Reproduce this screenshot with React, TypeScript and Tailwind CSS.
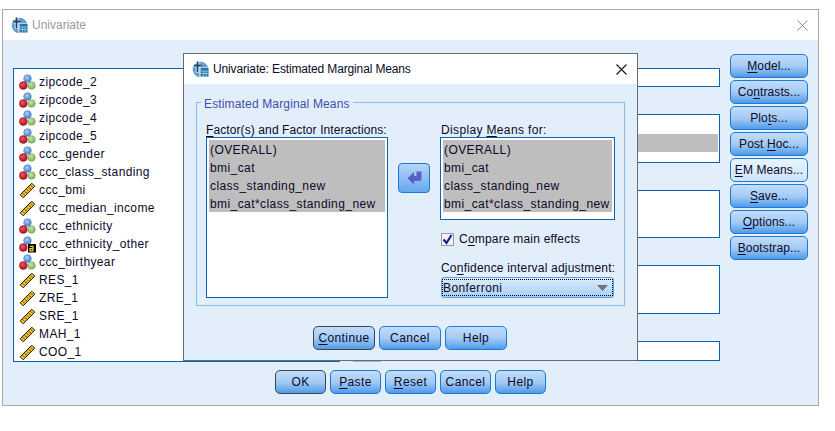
import type { ReactNode } from 'react';

function TitleIcon() {
  return (
    <svg width="17" height="17" viewBox="0 0 17 17" className="shrink-0">
      <circle cx="8.5" cy="8.5" r="7.8" fill="#5f9ed2" />
      <path d="M5.5 1v11M2 4.5h7" stroke="#fff" strokeWidth="3.4" fill="none" />
      <path d="M5.5 0.5v11M2 4.5h7.5" stroke="#17406b" strokeWidth="1.8" fill="none" />
      <rect x="7.5" y="6.5" width="9" height="9.5" fill="#fff" />
      <rect x="8.5" y="7" width="8" height="8.5" fill="#2374ad" />
      <path d="M9 10h7M9 12.5h7M11.5 10v5M14 10v5" stroke="#a9cde8" strokeWidth="0.8" fill="none" />
    </svg>
  );
}

function BallDefs() {
  return (
    <svg width="0" height="0" className="absolute">
      <defs>
        <radialGradient id="ballBlue" cx="40%" cy="35%" r="70%">
          <stop offset="0%" stopColor="#a9cdf3" />
          <stop offset="100%" stopColor="#3f7fd0" />
        </radialGradient>
        <radialGradient id="ballRed" cx="40%" cy="35%" r="70%">
          <stop offset="0%" stopColor="#f0555f" />
          <stop offset="100%" stopColor="#a80d1c" />
        </radialGradient>
        <radialGradient id="ballGreen" cx="40%" cy="35%" r="70%">
          <stop offset="0%" stopColor="#c9e5a6" />
          <stop offset="100%" stopColor="#77ab52" />
        </radialGradient>
      </defs>
    </svg>
  );
}

function NominalIcon({ text }: { text?: boolean }) {
  return (
    <svg width="17" height="17" viewBox="0 0 17 17" className="shrink-0">
      <circle cx="8.5" cy="4.5" r="3.8" fill="url(#ballBlue)" stroke="#3a6fb5" strokeWidth="0.5" />
      {!text && <circle cx="12.5" cy="11.5" r="3.8" fill="url(#ballGreen)" stroke="#6d9c4c" strokeWidth="0.5" />}
      <circle cx="4.3" cy="11.5" r="3.9" fill="url(#ballRed)" stroke="#8d0d18" strokeWidth="0.5" />
      {text && (
        <>
          <rect x="9" y="8" width="8" height="8.5" fill="#000" />
          <path d="M11 10.3h3v4.5h-3v-2.2h3" stroke="#f5d90a" strokeWidth="1.2" fill="none" />
        </>
      )}
    </svg>
  );
}

function ScaleIcon() {
  return (
    <svg width="17" height="17" viewBox="0 0 17 17" className="shrink-0">
      <path d="M1.2 12.8 12.8 1.2 15.8 4.2 4.2 15.8Z" fill="#f6c21c" stroke="#1c1c1c" strokeWidth="1" />
      <path d="M4 11.5l1.3 1.3M6 9.5l1.8 1.8M8 7.5l1.3 1.3M10 5.5l1.8 1.8M12 3.5l1.3 1.3" stroke="#1c1c1c" strokeWidth="1" fill="none" />
    </svg>
  );
}

function Key({ children }: { children: ReactNode }) {
  return <span className="underline underline-offset-2">{children}</span>;
}

type ButtonProps = { children: ReactNode; w: string; focused?: boolean; hot?: boolean; tight?: boolean };

function Btn({ children, w, focused, hot, tight }: ButtonProps) {
  return (
    <button
      className={`${w} h-6 shrink-0 rounded-[5px] border text-center text-xs leading-none text-[#0a0a28] bg-linear-to-b ${
        tight ? 'tracking-[0.1px]' : 'tracking-[0.4px]'
      } ${hot ? 'border-[#1a7ad8] from-[#e9f3fd] to-[#cde3fa]' : 'from-[#c2dcfa] via-[#a5cbf5] to-[#4f9ae8]'} ${
        focused ? 'border-[#3b4652] border-[1.5px]' : hot ? '' : 'border-[#1a7ad8]'
      }`}
    >
      {children}
    </button>
  );
}

function ListBox({ rows, className }: { rows: string[]; className: string }) {
  return (
    <div className={`${className} border border-[#0a64b4] bg-white p-[2px] text-xs tracking-[0.42px] text-[#0a0a28]`}>
      {rows.map((r) => (
        <div key={r} className="flex h-[18px] items-center bg-[#bebebe] pl-px pt-px whitespace-nowrap">
          {r}
        </div>
      ))}
    </div>
  );
}

const variables = [
  { name: 'zipcode_2', kind: 'nominal' },
  { name: 'zipcode_3', kind: 'nominal' },
  { name: 'zipcode_4', kind: 'nominal' },
  { name: 'zipcode_5', kind: 'nominal' },
  { name: 'ccc_gender', kind: 'nominal' },
  { name: 'ccc_class_standing', kind: 'nominal' },
  { name: 'ccc_bmi', kind: 'scale' },
  { name: 'ccc_median_income', kind: 'scale' },
  { name: 'ccc_ethnicity', kind: 'nominal' },
  { name: 'ccc_ethnicity_other', kind: 'text' },
  { name: 'ccc_birthyear', kind: 'nominal' },
  { name: 'RES_1', kind: 'scale' },
  { name: 'ZRE_1', kind: 'scale' },
  { name: 'SRE_1', kind: 'scale' },
  { name: 'MAH_1', kind: 'scale' },
  { name: 'COO_1', kind: 'scale' },
];

const factorRows = ['(OVERALL)', 'bmi_cat', 'class_standing_new', 'bmi_cat*class_standing_new'];

function EstimatedMeansDialog() {
  return (
    <div className="absolute left-[180px] top-[43px] z-10 flex h-[308px] w-[455px] flex-col border border-[#666c74] bg-[#e3eefb]">
      <div className="flex h-[30px] items-center gap-[4px] bg-white pl-[8px] pr-[10px]">
        <TitleIcon />
        <span className="text-xs tracking-[-0.14px] text-[#0a0a28]">Univariate: Estimated Marginal Means</span>
        <svg width="11" height="11" viewBox="0 0 11 11" className="ml-auto">
          <path d="M0.5 0.5l10 10M10.5 0.5l-10 10" stroke="#111" strokeWidth="1.1" fill="none" />
        </svg>
      </div>

      <fieldset className="ml-[12px] mr-[13px] mt-[11px] h-[211px] border border-[#8dbbe6] px-[9px]">
        <legend className="ml-[-5px] px-[3px] text-xs leading-[14px] tracking-[0.15px] text-[#3f4fa8]">
          <span className="block translate-y-[2px]">Estimated Marginal Means</span>
        </legend>
        <div className="mt-[12px] flex">
          <div className="w-[182px]">
            <div className="h-4 pt-px text-xs leading-4 tracking-[0.1px] whitespace-nowrap text-[#0a0a28]">
              <Key>F</Key>actor(s) and Factor Interactions:
            </div>
            <ListBox rows={factorRows} className="h-[161px] w-[182px]" />
          </div>

          <button className="ml-[10px] mt-[42px] flex h-[30px] w-[32px] items-center justify-center rounded-[4px] border border-[#1a7ad8] bg-linear-to-b from-[#b4d5f8] to-[#66a9ec]">
            <svg width="15" height="14" viewBox="0 0 15 14">
              <path d="M14.5 0.5v7.5q0 2-2 2H7v3.5L0.5 7.2 7 1v4h2.5V0.5Z" fill="#5a5fc4" />
            </svg>
          </button>

          <div className="ml-[10px] w-[175px]">
            <div className="h-4 pl-px pt-px text-xs leading-4 tracking-[0.35px] whitespace-nowrap text-[#0a0a28]">
              Display <Key>M</Key>eans for:
            </div>
            <ListBox rows={factorRows} className="h-[83px] w-[175px]" />
            <div className="mt-[12px] flex h-[14px] items-center gap-[5px] pl-px text-xs tracking-[0.2px] text-[#0a0a28]">
              <span className="flex h-[13px] w-[13px] items-center justify-center border border-[#9a9a9a] bg-[#f2f2f2]">
                <svg width="11" height="11" viewBox="0 0 11 11">
                  <path d="M1.5 5.5l3 3.5 5-8" stroke="#1b1b8a" strokeWidth="2.2" fill="none" />
                </svg>
              </span>
              <span>
                C<Key>o</Key>mpare main effects
              </span>
            </div>
            <div className="mt-[13px] h-4 pl-px pt-px text-xs leading-4 tracking-[0.2px] whitespace-nowrap text-[#0a0a28]">
              Co<Key>n</Key>fidence interval adjustment:
            </div>
            <div className="ml-px mt-[2px] flex h-[21px] w-[173px] items-center rounded-[3px] border border-[#5aa2ea] bg-linear-to-b from-[#dcecfc] to-[#a9cff6]">
              <div className="flex h-[17px] w-full items-center justify-between border border-dotted border-black pr-[4px] text-xs tracking-[0.4px] text-[#0a0a28]">
                Bonferroni
                <svg width="11" height="6" viewBox="0 0 11 6">
                  <path d="M0 0h11L5.5 6Z" fill="#6e7378" />
                </svg>
              </div>
            </div>
          </div>
        </div>
      </fieldset>

      <div className="mt-[20px] flex gap-1 pl-[129px]">
        <Btn w="w-[62px]" focused>
          <Key>C</Key>ontinue
        </Btn>
        <Btn w="w-[62px]">Cancel</Btn>
        <Btn w="w-[62px]">Help</Btn>
      </div>
    </div>
  );
}

export default function App() {
  return (
    <div className="h-[431px] w-[835px] bg-white pl-[2px] pt-[9px] font-['Liberation_Sans',Arial,sans-serif]">
      <BallDefs />
      <div className="relative h-[397px] w-[817px] border border-[#a8a8a8] bg-[#e3eefb]">
        <div className="flex h-[30px] items-center gap-[4px] bg-white pl-[8px] pr-[10px]">
          <TitleIcon />
          <span className="text-xs text-[#9a9a9a]">Univariate</span>
          <svg width="11" height="11" viewBox="0 0 11 11" className="ml-auto">
            <path d="M0.5 0.5l10 10M10.5 0.5l-10 10" stroke="#8a8a8a" strokeWidth="1" fill="none" />
          </svg>
        </div>

        <div className="flex h-[321px] pl-[10px] pt-[14px]">
          <div className="mt-[14px] h-[294px] w-[327px] shrink-0 border border-[#0a64b4] bg-white pl-[5px] pt-[4px] text-xs tracking-[0.38px] text-[#0a0a28]">
            {variables.map((v) => (
              <div key={v.name} className="flex h-[18px] items-center gap-[3px]">
                {v.kind === 'scale' ? <ScaleIcon /> : <NominalIcon text={v.kind === 'text'} />}
                <span>{v.name}</span>
              </div>
            ))}
          </div>

          <div className="flex h-[308px] w-[53px] shrink-0 items-end pl-[13px]">
            <div className="h-px w-[28px] bg-[#8fb9e6]" />
          </div>

          <div className="mt-[14px] flex w-[327px] shrink-0 flex-col gap-[27px]">
            <div className="h-[19px] border border-[#0a64b4] bg-white" />
            <div className="h-[49px] border border-[#0a64b4] bg-white pr-px pt-[19px]">
              <div className="h-[18px] bg-[#bebebe]" />
            </div>
            <div className="h-[49px] border border-[#0a64b4] bg-white" />
            <div className="h-[49px] border border-[#0a64b4] bg-white" />
            <div className="h-[20px] border border-[#0a64b4] bg-white" />
          </div>

          <div className="ml-[10px] flex w-[78px] shrink-0 flex-col gap-[2px]">
            <Btn w="w-[78px]" tight>
              <Key>M</Key>odel...
            </Btn>
            <Btn w="w-[78px]" tight>
              Co<Key>n</Key>trasts...
            </Btn>
            <Btn w="w-[78px]" tight>
              Plo<Key>t</Key>s...
            </Btn>
            <Btn w="w-[78px]" tight>
              Post <Key>H</Key>oc...
            </Btn>
            <Btn w="w-[78px]" hot tight>
              <Key>E</Key>M Means...
            </Btn>
            <Btn w="w-[78px]" tight>
              <Key>S</Key>ave...
            </Btn>
            <Btn w="w-[78px]" tight>
              <Key>O</Key>ptions...
            </Btn>
            <Btn w="w-[78px]" tight>
              <Key>B</Key>ootstrap...
            </Btn>
          </div>
        </div>

        <div className="mt-[9px] flex justify-center gap-1">
          <Btn w="w-[51px]" focused>OK</Btn>
          <Btn w="w-[51px]">
            <Key>P</Key>aste
          </Btn>
          <Btn w="w-[51px]">
            <Key>R</Key>eset
          </Btn>
          <Btn w="w-[51px]">Cancel</Btn>
          <Btn w="w-[51px]">Help</Btn>
        </div>

        <EstimatedMeansDialog />
      </div>
    </div>
  );
}
